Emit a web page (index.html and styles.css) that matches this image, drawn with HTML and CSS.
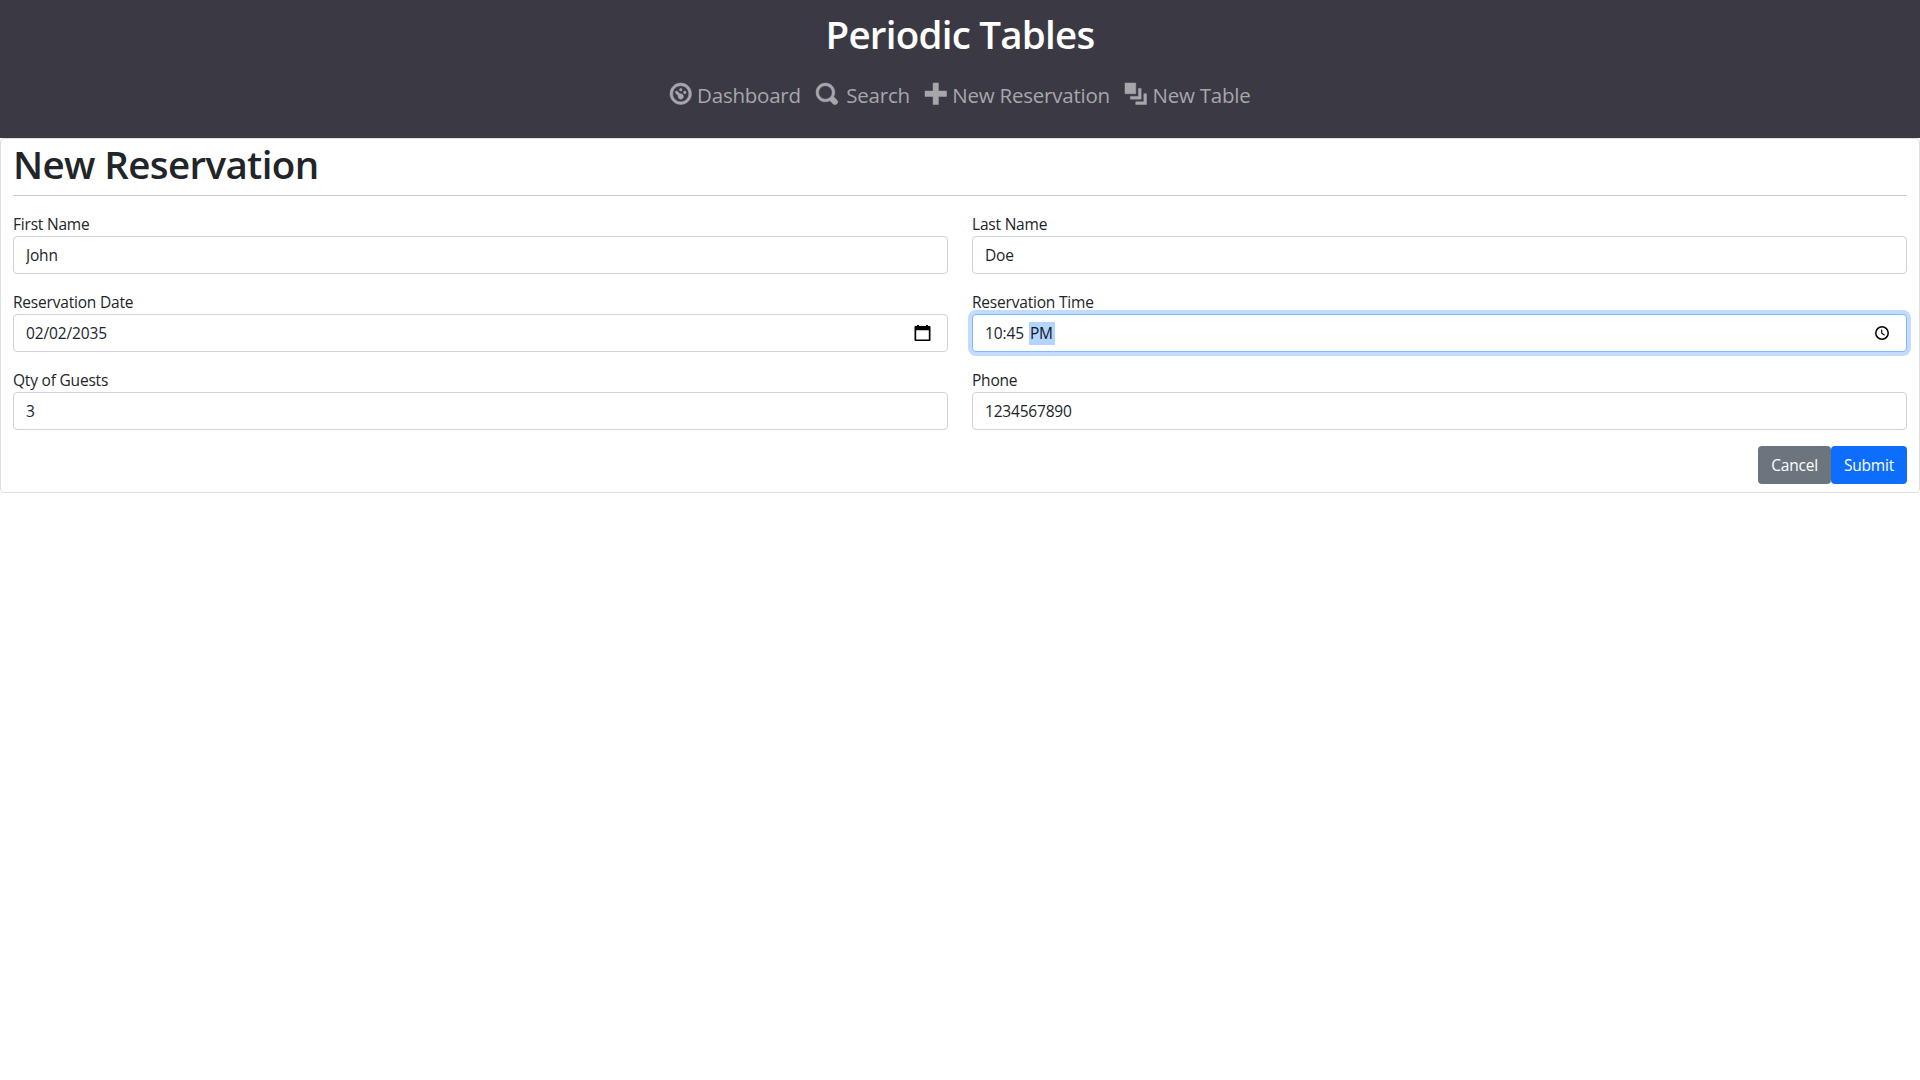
FILE: index.html
```html
<!DOCTYPE html>
<html lang="en">
<head>
<meta charset="utf-8">
<title>Periodic Tables</title>
<link rel="stylesheet" href="styles.css">
</head>
<body>
<header class="header">
  <h1 class="brand">Periodic Tables</h1>
  <nav class="nav">
    <a class="nav-link"><svg class="oi" viewBox="0 0 8 8"><path d="M4 0c-2.2 0-4 1.8-4 4s1.8 4 4 4 4-1.8 4-4-1.8-4-4-4zm0 1c1.66 0 3 1.34 3 3s-1.34 3-3 3-3-1.34-3-3 1.34-3 3-3zm0 1c-.28 0-.5.22-.5.5s.22.5.5.5.5-.22.5-.5-.22-.5-.5-.5zm-1.66 1a.5.5 0 0 0-.19.84l.91.91c-.02.08-.06.16-.06.25 0 .55.45 1 1 1s1-.45 1-1c0-.55-.45-1-1-1-.09 0-.17.04-.25.06l-.91-.91a.5.5 0 0 0-.44-.16.5.5 0 0 0-.06 0zm3.16 0c-.28 0-.5.22-.5.5s.22.5.5.5.5-.22.5-.5-.22-.5-.5-.5z"/></svg><span>Dashboard</span></a>
    <a class="nav-link nav-search"><svg class="oi" viewBox="0 0 8 8"><path d="M3.5 0c-1.93 0-3.5 1.57-3.5 3.5s1.57 3.5 3.5 3.5c.59 0 1.17-.14 1.66-.41a1 1 0 0 0 .13.13l1 1a1.02 1.02 0 1 0 1.44-1.44l-1-1a1 1 0 0 0-.16-.13c.27-.49.44-1.06.44-1.66 0-1.93-1.55-3.5-3.5-3.5zm0 1c1.39 0 2.5 1.11 2.5 2.5 0 .66-.24 1.27-.66 1.72l-.03.03a1 1 0 0 0-.13.13c-.44.4-1.04.63-1.69.63-1.39 0-2.5-1.11-2.5-2.5s1.11-2.5 2.5-2.5z"/></svg><span>Search</span></a>
    <a class="nav-link"><svg class="oi" viewBox="0 0 8 8"><path d="M3 0v3h-3v2h3v3h2v-3h3v-2h-3v-3h-2z"/></svg><span>New Reservation</span></a>
    <a class="nav-link"><svg class="oi" viewBox="0 0 8 8"><path d="M0 0v4h4v-4h-4zm5 2v3h-3v1h4v-4h-1zm2 2v3h-3v1h4v-4h-1z"/></svg><span>New Table</span></a>
  </nav>
</header>
<main class="card">
  <h2 class="title">New Reservation</h2>
  <hr class="rule">
  <form class="form">
    <div class="group"><label class="label" for="first">First Name</label><input class="field" id="first" type="text" value="John"></div>
    <div class="group"><label class="label" for="last">Last Name</label><input class="field" id="last" type="text" value="Doe"></div>
    <div class="group">
      <label class="label">Reservation Date</label>
      <div class="field"><span class="value">02/02/2035</span>
        <svg class="picker" viewBox="0 0 20 20"><path fill-rule="evenodd" d="M4 2h2v1h7V2h2v1h1.5q1 0 1 1v13q0 1-1 1h-14q-1 0-1-1V4q0-1 1-1H4zM3.2 7.2v9.2h12.6V7.2z"/></svg>
      </div>
    </div>
    <div class="group">
      <label class="label">Reservation Time</label>
      <div class="field focused"><span class="value">10:45</span><span class="selected">PM</span>
        <svg class="picker" viewBox="0 0 20 20"><circle cx="10" cy="10" r="6.2" fill="none" stroke="#000" stroke-width="1.5"/><path d="M9.7 6.5v3.8l2.9 1.9" fill="none" stroke="#000" stroke-width="1.1"/></svg>
      </div>
    </div>
    <div class="group"><label class="label" for="guests">Qty of Guests</label><input class="field" id="guests" type="text" value="3"></div>
    <div class="group"><label class="label" for="phone">Phone</label><input class="field" id="phone" type="text" value="1234567890"></div>
  </form>
  <div class="actions"><button class="btn btn-secondary">Cancel</button><button class="btn btn-primary">Submit</button></div>
</main>
</body>
</html>
```
FILE: styles.css
```css
* { box-sizing: border-box; }
body { margin: 0; font: 400 15.5px/24px "Open Sans", sans-serif; letter-spacing: -0.2px; color: #212529; background: #fff; }
.header { height: 138px; background: #3b3a44; }
.brand { margin: 0; padding-top: 10px; font-size: 38.5px; line-height: 48px; font-weight: 600; letter-spacing: -0.75px; color: #fff; text-align: center; }
.nav { display: flex; justify-content: center; gap: 15px; padding-top: 20px; }
.nav-link { display: flex; gap: 6px; font-size: 20.5px; line-height: 34px; letter-spacing: -0.23px; color: #a7a6ab; }
.nav-search { gap: 9px; }
.oi { width: 21.5px; height: 21.5px; fill: currentColor; stroke: currentColor; stroke-width: 0.18; overflow: visible; margin-top: 5px; }
.card { border: 1px solid #dfdfdf; border-radius: 4px; padding: 0 12px 8px; }
.title { margin: 0; padding-top: 1px; height: 56px; font-size: 38.5px; line-height: 48px; font-weight: 600; letter-spacing: -0.62px; }
.rule { margin: 0 0 16px; border: 0; height: 1px; background: #c7c8c9; }
.form { display: grid; grid-template-columns: 1fr 1fr; gap: 16px 24px; }
.label { display: block; }
.field { display: flex; align-items: center; width: 100%; height: 38px; border: 1px solid #ced4da; border-radius: 4px; padding: 6px 12px; font: inherit; letter-spacing: inherit; color: inherit; background: #fff; }
.value { letter-spacing: -0.12px; }
.focused { border-color: #86b7fe; box-shadow: 0 0 0 4px #c2dbfe; }
.selected { margin-left: 5px; width: 26px; height: 23px; line-height: 23px; padding-left: 1px; color: #101820; background: #b3d4ff; }
.picker { width: 20px; height: 20px; margin-left: auto; margin-right: 2px; }
.actions { display: flex; justify-content: flex-end; margin-top: 16px; }
.btn { height: 38px; border: 0; border-radius: 4px; padding: 0 13px; font: inherit; letter-spacing: inherit; color: #fff; }
.btn-secondary { background: #6c757d; }
.btn-primary { background: #0d6efd; }
```
